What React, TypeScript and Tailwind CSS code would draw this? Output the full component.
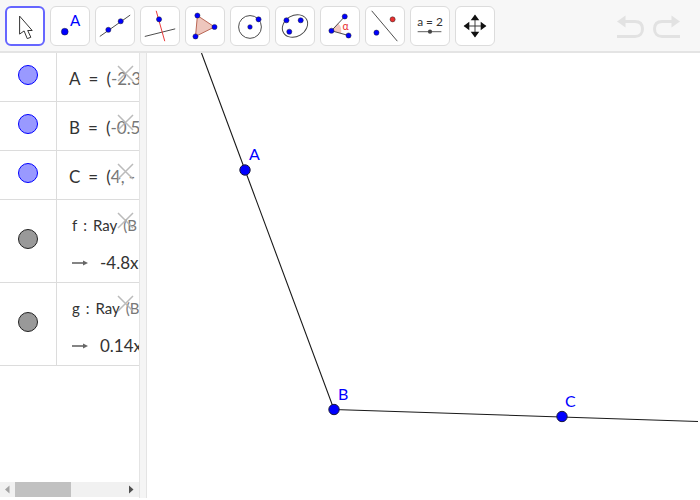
const mathFont = { fontFamily: "Lato, sans-serif" };

function Tool({ active, children }: { active?: boolean; children: React.ReactNode }) {
  return (
    <div
      className={`w-10 h-10 shrink-0 rounded-md bg-white ${
        active ? "border-2 border-[#6666ff]" : "border border-[#dcdcdc]"
      }`}
    >
      <svg viewBox="0 0 40 40" className="w-full h-full">
        {children}
      </svg>
    </div>
  );
}

function Dot({ x, y, r = 2.7, fill = "#0000ff" }: { x: number; y: number; r?: number; fill?: string }) {
  return <circle cx={x} cy={y} r={r} fill={fill} stroke="#222" strokeWidth={0.5} />;
}

function Toolbar() {
  return (
    <div className="h-[53px] shrink-0 bg-[#f7f7f7] border-b-2 border-[#e4e4e4] flex items-start gap-[5px] pl-[5px] pt-[6px]">
      <Tool active>
        <path
          d="M14 9 L14 29 L19 25.5 L22.5 34 L26.5 32.5 L23 25 L28 25 Z"
          fill="#fff"
          stroke="#333"
          strokeWidth={1.1}
          strokeLinejoin="round"
        />
      </Tool>
      <Tool>
        <circle cx={14.5} cy={26} r={3.6} fill="#0000ff" stroke="#222" strokeWidth={0.5} />
        <text x={20} y={20} fontSize={16} fill="#0000ff" style={mathFont}>A</text>
      </Tool>
      <Tool>
        <line x1={4} y1={31} x2={36} y2={8.5} stroke="#444" strokeWidth={1} />
        <Dot x={13} y={24} />
        <Dot x={26} y={15} />
      </Tool>
      <Tool>
        <line x1={4} y1={31} x2={36} y2={23} stroke="#444" strokeWidth={1} />
        <line x1={16} y1={4} x2={25} y2={36} stroke="#e83030" strokeWidth={1} />
        <Dot x={19} y={13} />
      </Tool>
      <Tool>
        <path d="M12 9 L30 21 L10 31 Z" fill="#eec6bd" stroke="#b5604e" strokeWidth={1} />
        <Dot x={12} y={9} />
        <Dot x={30} y={21} />
        <Dot x={10} y={31} />
      </Tool>
      <Tool>
        <circle cx={20} cy={21} r={12} fill="none" stroke="#444" strokeWidth={1} />
        <Dot x={20} y={21} r={2.4} />
        <Dot x={29} y={13} />
      </Tool>
      <Tool>
        <ellipse cx={20} cy={20} rx={14} ry={11} fill="none" stroke="#444" strokeWidth={1} transform="rotate(-30 20 20)" />
        <Dot x={11} y={14} />
        <Dot x={26} y={14} />
        <Dot x={14} y={26} />
      </Tool>
      <Tool>
        <path d="M11 25 L18 17 A12 12 0 0 1 21 28 Z" fill="#f3c8c0" />
        <path d="M25 10 L11 25 L29 30" fill="none" stroke="#444" strokeWidth={1} />
        <Dot x={25} y={10} />
        <Dot x={11} y={25} />
        <Dot x={29} y={30} />
        <text x={22.5} y={24} fontSize={11} fill="#e83030" style={mathFont}>α</text>
      </Tool>
      <Tool>
        <line x1={6} y1={4} x2={33} y2={36} stroke="#444" strokeWidth={1} />
        <Dot x={11} y={27} />
        <Dot x={28} y={13} fill="#e83030" />
      </Tool>
      <Tool>
        <text x={20} y={20} fontSize={12.5} fill="#333" textAnchor="middle" style={mathFont}>a = 2</text>
        <line x1={7} y1={26} x2={32} y2={26} stroke="#555" strokeWidth={1} />
        <circle cx={20} cy={26} r={2.2} fill="#444" />
      </Tool>
      <Tool>
        <path d="M20 9 V31 M9 20 H31" stroke="#333" strokeWidth={1} fill="none" />
        <path
          d="M20 8 L24.5 14 H15.5 Z M20 32 L24.5 26 H15.5 Z M8 20 L14 15.5 V24.5 Z M32 20 L26 15.5 V24.5 Z"
          fill="#111"
        />
      </Tool>
      <div className="ml-auto mr-[19px] mt-[9px] flex gap-[9px]">
        <svg width="28" height="24" viewBox="0 0 28 24" fill="none" stroke="#e2e2e2" strokeWidth={3}>
          <path d="M9 6.5 H19 C25 6.5 26.5 10 26.5 14 C26.5 18 24 21.5 19 21.5 H1" />
          <path d="M9.5 0.5 V12.5 L1 6.5 Z" fill="#e2e2e2" stroke="none" />
        </svg>
        <svg width="28" height="24" viewBox="0 0 28 24" fill="none" stroke="#e2e2e2" strokeWidth={3}>
          <path d="M19 6.5 H9 C3 6.5 1.5 10 1.5 14 C1.5 18 4 21.5 9 21.5 H27" />
          <path d="M18.5 0.5 V12.5 L27 6.5 Z" fill="#e2e2e2" stroke="none" />
        </svg>
      </div>
    </div>
  );
}

function Marble({ color, edge }: { color: string; edge: string }) {
  return (
    <div className="w-[57px] shrink-0 self-stretch border-r border-[#dcdcdc] flex items-center justify-center pb-[5px]">
      <div className={`w-5 h-5 rounded-full border ${color} ${edge}`} />
    </div>
  );
}

function ClearX() {
  return (
    <svg className="absolute left-[117px] top-[12px]" width="17" height="17" viewBox="0 0 17 17" stroke="#b4b4b4" strokeWidth={1.5} opacity={0.9}>
      <path d="M1 1 L16 16 M16 1 L1 16" />
    </svg>
  );
}

function PointRow({ name, value }: { name: string; value: string }) {
  return (
    <div className="relative h-[49px] shrink-0 border-b border-[#dcdcdc] flex">
      <Marble color="bg-[#9999ff]" edge="border-[#0000ff]" />
      <div className="pl-3 pt-[14px] flex gap-2 text-[17px] leading-[24px] text-[#333] whitespace-nowrap overflow-hidden" style={mathFont}>
        <span>{name}</span>
        <span>=</span>
        <span>
          (<span className="text-[#777]">{value}</span>
        </span>
      </div>
      <ClearX />
    </div>
  );
}

function RayRow({ name, value }: { name: string; value: string }) {
  return (
    <div className="relative h-[83px] shrink-0 border-b border-[#dcdcdc] flex">
      <Marble color="bg-[#999999]" edge="border-[#222222]" />
      <div className="pl-[15px] flex flex-col whitespace-nowrap overflow-hidden text-[#333]" style={mathFont}>
        <div className="mt-[13px] h-6 flex gap-[6px] text-[15px] leading-6">
          <span>{name}</span>
          <span>:</span>
          <span>Ray</span>
          <span className="text-[#777]">(B</span>
        </div>
        <div className="mt-[14px] h-6 flex items-center text-[17px]">
          <svg width="16" height="8" viewBox="0 0 16 8" className="shrink-0">
            <path d="M0 4 H12" stroke="#666" strokeWidth={1.6} />
            <path d="M11 1.5 L16 4 L11 6.5 Z" fill="#666" />
          </svg>
          <span className="ml-[12px]">{value}</span>
        </div>
      </div>
      <ClearX />
    </div>
  );
}

function AlgebraPanel() {
  return (
    <div className="w-[139px] shrink-0 flex flex-col bg-white relative">
      <div className="flex-1 flex flex-col overflow-hidden">
        <PointRow name="A" value="-2.3" />
        <PointRow name="B" value="-0.5" />
        <PointRow name="C" value="4, -" />
        <RayRow name="f" value="-4.8x" />
        <RayRow name="g" value="0.14x" />
      </div>
      <div className="h-[15px] mb-px shrink-0 bg-[#f1f1f1] flex items-center justify-between relative">
        <svg width="15" height="15" viewBox="0 0 15 15"><path d="M9.5 3.5 L5 7.5 L9.5 11.5 Z" fill="#a3a3a3" /></svg>
        <div className="absolute left-[15px] w-14 h-[15px] bg-[#c1c1c1]" />
        <svg width="15" height="15" viewBox="0 0 15 15"><path d="M5 3.5 L9.5 7.5 L5 11.5 Z" fill="#505050" /></svg>
      </div>
    </div>
  );
}

function Canvas() {
  const dots = [
    { x: 98, y: 117, label: "A", lx: 102, ly: 107 },
    { x: 187, y: 356.5, label: "B", lx: 191, ly: 347 },
    { x: 415, y: 363.5, label: "C", lx: 418, ly: 354 },
  ];
  return (
    <div className="flex-1 bg-white relative overflow-hidden">
      <svg className="absolute inset-0" width="552" height="445" viewBox="0 0 552 445">
        <path d="M54.5 0 L187 356.5 L551 368.5" fill="none" stroke="#1a1a1a" strokeWidth={1.1} />
        {dots.map((d) => (
          <g key={d.label}>
            <circle cx={d.x} cy={d.y} r={5.2} fill="#0000ff" stroke="#1a1a3a" strokeWidth={1} />
            <text x={d.lx} y={d.ly} fontSize={16} fill="#0000ff" style={mathFont}>{d.label}</text>
          </g>
        ))}
      </svg>
    </div>
  );
}

export default function App() {
  return (
    <div className="w-[700px] h-[498px] flex flex-col overflow-hidden bg-white">
      <Toolbar />
      <div className="flex-1 flex min-h-0">
        <AlgebraPanel />
        <div className="w-2 shrink-0 bg-[#f5f5f5] border-x border-[#e4e4e4]" />
        <Canvas />
      </div>
    </div>
  );
}
